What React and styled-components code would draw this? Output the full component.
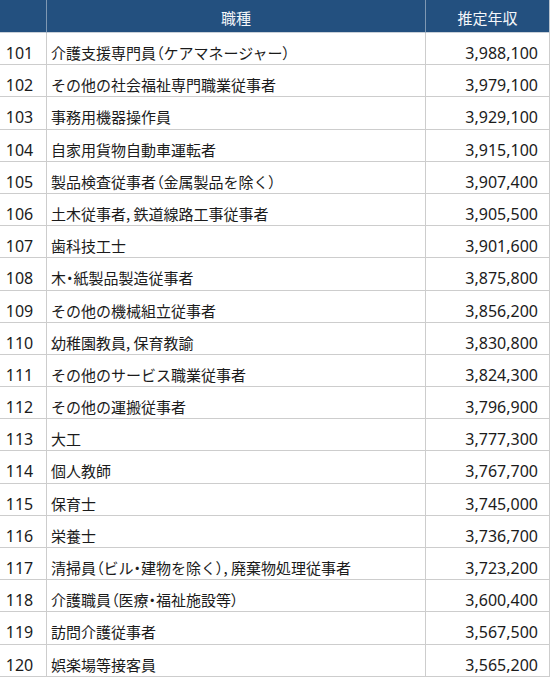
import React from 'react';
import styled, { createGlobalStyle } from 'styled-components';

const GlobalStyle = createGlobalStyle`
  html, body {
    margin: 0;
    padding: 0;
    background: #ffffff;
  }
  body {
    font-family: "Noto Sans", "Noto Sans CJK JP", sans-serif;
    color: #1b1b1b;
  }
`;

const Table = styled.div`
  display: grid;
  grid-template-columns: 47px 379px 124px;
  grid-template-rows: 33px;
  grid-auto-rows: 32.2px;
  width: 550px;
`;

const HeadCell = styled.div`
  box-sizing: border-box;
  background: #23507f;
  color: #f4f6f9;
  font-family: "Noto Sans CJK JP", sans-serif;
  font-size: 15px;
  line-height: 20px;
  padding-top: 8px;
  text-align: center;
  border-right: 1px solid ${props => props.last ? '#b9c3ce' : '#7f98b3'};
  border-bottom: 1px solid #c9d0d8;
`;

const Cell = styled.div`
  box-sizing: border-box;
  border-right: 1px solid #cdcdcd;
  border-bottom: 1px solid #cdcdcd;
  font-size: ${props => props.num ? '16px' : '15px'};
  font-family: ${props => props.num ? '"Noto Sans", sans-serif' : '"Noto Sans CJK JP", sans-serif'};
  line-height: 20px;
  padding: ${props => props.num ? '10px 11px 0 4px' : '10px 4px 0 4px'};
  text-align: ${props => props.align || 'left'};
  white-space: nowrap;
  overflow: hidden;
`;

// brackets and middle dots are set narrow, as in the source sheet
const Punct = styled.span`
  font-feature-settings: "palt";
`;

const rows = [
  [101, '介護支援専門員（ケアマネージャー）', '3,988,100'],
  [102, 'その他の社会福祉専門職業従事者', '3,979,100'],
  [103, '事務用機器操作員', '3,929,100'],
  [104, '自家用貨物自動車運転者', '3,915,100'],
  [105, '製品検査従事者（金属製品を除く）', '3,907,400'],
  [106, '土木従事者, 鉄道線路工事従事者', '3,905,500'],
  [107, '歯科技工士', '3,901,600'],
  [108, '木・紙製品製造従事者', '3,875,800'],
  [109, 'その他の機械組立従事者', '3,856,200'],
  [110, '幼稚園教員, 保育教諭', '3,830,800'],
  [111, 'その他のサービス職業従事者', '3,824,300'],
  [112, 'その他の運搬従事者', '3,796,900'],
  [113, '大工', '3,777,300'],
  [114, '個人教師', '3,767,700'],
  [115, '保育士', '3,745,000'],
  [116, '栄養士', '3,736,700'],
  [117, '清掃員（ビル・建物を除く）, 廃棄物処理従事者', '3,723,200'],
  [118, '介護職員（医療・福祉施設等）', '3,600,400'],
  [119, '訪問介護従事者', '3,567,500'],
  [120, '娯楽場等接客員', '3,565,200'],
];

const renderJob = (text) =>
  text.split(/([（）・])/).filter(Boolean).map((part, i) =>
    /^[（）・]$/.test(part) ? <Punct key={i}>{part}</Punct> : part
  );

function App() {
  return (
    <>
      <GlobalStyle />
      <Table>
        <HeadCell></HeadCell>
        <HeadCell>職種</HeadCell>
        <HeadCell last>推定年収</HeadCell>
        {rows.map(([rank, job, income]) => (
          <React.Fragment key={rank}>
            <Cell num align="center">{rank}</Cell>
            <Cell>{renderJob(job)}</Cell>
            <Cell num align="right">{income}</Cell>
          </React.Fragment>
        ))}
      </Table>
    </>
  );
}

export default App;
